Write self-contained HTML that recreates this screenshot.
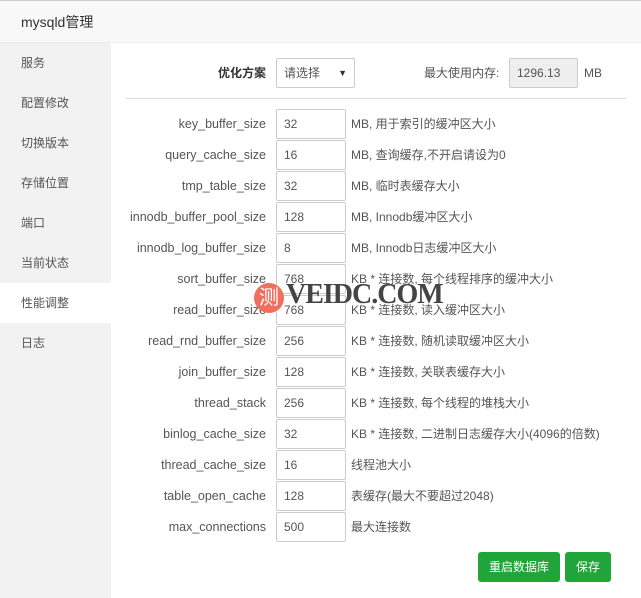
<!DOCTYPE html>
<html><head><meta charset="utf-8"><style>
*{margin:0;padding:0;box-sizing:border-box}
body{width:641px;height:598px;overflow:hidden;background:#fff;font-family:"Liberation Sans","Noto Sans CJK SC",sans-serif;font-size:12px;color:#555;position:relative;line-height:16px}
.hd{position:absolute;left:0;top:0;width:641px;height:43px;background:#f8f8f8;border-bottom:1px solid #eee;border-top:1px solid #ccc}
.hd span{position:absolute;left:21px;top:13px;font-size:14px;color:#333}
.sb{position:absolute;left:0;top:43px;width:111px;height:555px;background:#f2f2f2}
.sb div{height:40px;line-height:40px;padding-left:21px;font-size:12px;color:#555}
.sb .on{background:#fff}
.row{position:absolute;left:0;width:641px;height:30px}
.row .l{position:absolute;right:375px;top:0;height:30px;line-height:30px;white-space:nowrap;font-size:12.5px}
.row .i{position:absolute;left:276px;top:0;width:70px;height:30px;border:1px solid #ccc;border-radius:2px;padding-left:7px;line-height:28px;background:#fff}
.row .d{position:absolute;left:351px;top:0;height:30px;line-height:30px;white-space:nowrap}
.btn{position:absolute;top:552px;height:30px;line-height:30px;background:#20a53a;color:#fff;border-radius:3px;text-align:center;font-size:12px}
</style></head><body>
<div class="hd"><span>mysqld管理</span></div>
<div class="sb"><div>服务</div><div>配置修改</div><div>切换版本</div><div>存储位置</div><div>端口</div><div>当前状态</div><div class="on">性能调整</div><div>日志</div></div>
<div class="row" style="top:58px"><div class="l" style="font-weight:bold;color:#333;font-size:12px">优化方案</div><div class="i" style="width:79px">请选择<span style="position:absolute;right:7px;top:0;font-size:9px;color:#333">▼</span></div>
<div class="d" style="left:424px">最大使用内存:</div><div class="i" style="left:509px;width:69px;background:#eee">1296.13</div><div class="d" style="left:584px">MB</div></div>
<div style="position:absolute;left:126px;top:98px;width:500px;height:1px;background:#ddd"></div>
<div class="row" style="top:109px"><div class="l">key_buffer_size</div><div class="i">32</div><div class="d">MB, 用于索引的缓冲区大小</div></div>
<div class="row" style="top:140px"><div class="l">query_cache_size</div><div class="i">16</div><div class="d">MB, 查询缓存,不开启请设为0</div></div>
<div class="row" style="top:171px"><div class="l">tmp_table_size</div><div class="i">32</div><div class="d">MB, 临时表缓存大小</div></div>
<div class="row" style="top:202px"><div class="l">innodb_buffer_pool_size</div><div class="i">128</div><div class="d">MB, Innodb缓冲区大小</div></div>
<div class="row" style="top:233px"><div class="l">innodb_log_buffer_size</div><div class="i">8</div><div class="d">MB, Innodb日志缓冲区大小</div></div>
<div class="row" style="top:264px"><div class="l">sort_buffer_size</div><div class="i">768</div><div class="d">KB * 连接数, 每个线程排序的缓冲大小</div></div>
<div class="row" style="top:295px"><div class="l">read_buffer_size</div><div class="i">768</div><div class="d">KB * 连接数, 读入缓冲区大小</div></div>
<div class="row" style="top:326px"><div class="l">read_rnd_buffer_size</div><div class="i">256</div><div class="d">KB * 连接数, 随机读取缓冲区大小</div></div>
<div class="row" style="top:357px"><div class="l">join_buffer_size</div><div class="i">128</div><div class="d">KB * 连接数, 关联表缓存大小</div></div>
<div class="row" style="top:388px"><div class="l">thread_stack</div><div class="i">256</div><div class="d">KB * 连接数, 每个线程的堆栈大小</div></div>
<div class="row" style="top:419px"><div class="l">binlog_cache_size</div><div class="i">32</div><div class="d">KB * 连接数, 二进制日志缓存大小(4096的倍数)</div></div>
<div class="row" style="top:450px"><div class="l">thread_cache_size</div><div class="i">16</div><div class="d">线程池大小</div></div>
<div class="row" style="top:481px"><div class="l">table_open_cache</div><div class="i">128</div><div class="d">表缓存(最大不要超过2048)</div></div>
<div class="row" style="top:512px"><div class="l">max_connections</div><div class="i">500</div><div class="d">最大连接数</div></div>
<div style="position:absolute;left:254px;top:283px;width:30px;height:30px;border-radius:50%;background:#f07060;color:#fff;font-size:20px;line-height:30px;text-align:center">测</div>
<div style="position:absolute;left:286px;top:280px;line-height:30px;font-family:'Liberation Serif',serif;font-weight:bold;font-size:28px;color:#444;letter-spacing:-1px">VEIDC.COM</div>
<div class="btn" style="left:478px;width:82px">重启数据库</div>
<div class="btn" style="left:565px;width:46px">保存</div>
</body></html>
